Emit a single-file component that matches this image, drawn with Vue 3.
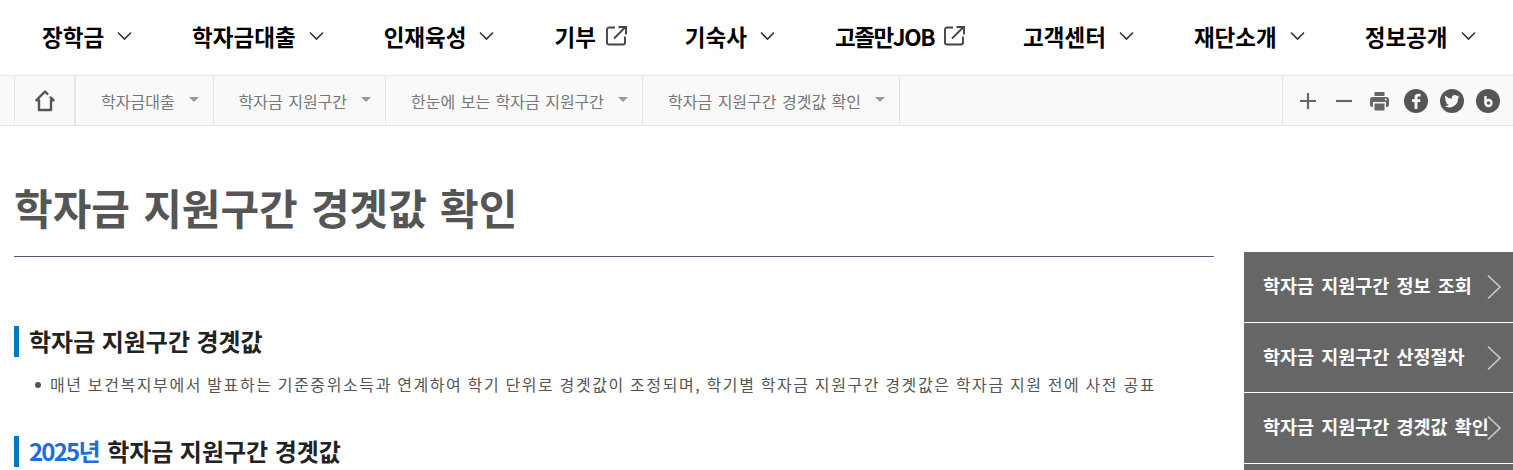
<template>
  <div class="page">
    <nav class="gnb">
      <a v-for="item in menus" :key="item.label" class="gnb-item" :class="{ job: item.label.includes('JOB'), linked: item.link }">
        <span>{{ item.label }}</span>
        <svg v-if="item.link" class="ext" width="21" height="20" viewBox="0 0 21 20" fill="none">
          <path d="M9 1.500H3A2 2 0 0 0 1 3.500v13a2 2 0 0 0 2 2h14a2 2 0 0 0 2-2v-6" stroke="#444" stroke-width="1.900" />
          <path d="M8 12.500 19 1.500M12.500 1H20v7.500" stroke="#444" stroke-width="1.900" />
        </svg>
        <svg v-else class="chev" width="15" height="10" viewBox="0 0 15 10" fill="none">
          <path d="M1 1.500 7.500 8 14 1.500" stroke="#333" stroke-width="1.600" />
        </svg>
      </a>
    </nav>

    <div class="crumbs">
      <a class="home">
        <svg width="22" height="22" viewBox="0 0 22 22" fill="none">
          <path d="M14 4.500 11 1.500 2.500 10.200H5V20h12v-9.800h2.500L16 6.800" stroke="#555" stroke-width="2.400" stroke-linejoin="round" />
        </svg>
      </a>
      <a v-for="c in crumbs" :key="c" class="crumb">
        <span>{{ c }}</span>
        <i class="caret"></i>
      </a>
      <div class="tools">
        <svg class="t-plus" width="16" height="16" viewBox="0 0 16 16"><path d="M8 0v16M0 8h16" stroke="#666" stroke-width="2.200" /></svg>
        <svg class="t-minus" width="16" height="16" viewBox="0 0 16 16"><path d="M0 8h16" stroke="#666" stroke-width="2.200" /></svg>
        <svg class="t-print" width="19" height="20" viewBox="0 0 19 20" fill="#666">
          <path d="M4.500 1h10v4h-10z" />
          <rect y="6" width="19" height="10" rx="2.500" />
          <rect x="3" y="11" width="13" height="9" fill="#f9f9f9" />
          <rect x="4.500" y="12.500" width="10" height="7" />
          <circle cx="15.800" cy="8.500" r="0.900" fill="#f9f9f9" />
        </svg>
        <svg class="t-fb" width="24" height="24" viewBox="0 0 24 24">
          <circle cx="12" cy="12" r="12" fill="#555" />
          <path d="M13.500 20v-7h2.600l.4-2.800h-3V8.700c0-.8.3-1.300 1.400-1.300h1.700V4.900c-.4 0-1.300-.1-2.300-.1-2.300 0-3.800 1.300-3.800 3.700v1.700H8V13h2.500v7Z" fill="#f9f9f9" />
        </svg>
        <svg class="t-tw" width="24" height="24" viewBox="0 0 24 24">
          <circle cx="12" cy="12" r="12" fill="#555" />
          <path d="M19.500 7.400c-.6.3-1.200.4-1.800.5.600-.4 1.100-1 1.300-1.700-.6.400-1.300.6-2 .8a3.100 3.100 0 0 0-5.300 2.800A8.800 8.800 0 0 1 5.400 6.500a3.100 3.100 0 0 0 1 4.100c-.5 0-1-.1-1.400-.4 0 1.500 1.100 2.800 2.500 3.100-.5.100-.9.100-1.400.1.400 1.200 1.500 2.100 2.900 2.100A6.200 6.200 0 0 1 4.500 17a8.800 8.800 0 0 0 13.500-7.800c.6-.4 1.100-1 1.500-1.800Z" fill="#f9f9f9" />
        </svg>
        <svg class="t-b" width="24" height="24" viewBox="0 0 24 24">
          <circle cx="12" cy="12" r="12" fill="#555" />
          <path d="M9.500 7v7.500" stroke="#f9f9f9" stroke-width="2.400" fill="none" />
          <circle cx="12.500" cy="14" r="3" stroke="#f9f9f9" stroke-width="2.400" fill="none" />
        </svg>
      </div>
    </div>

    <div class="body">
      <main class="content">
        <h1 class="title">학자금 지원구간 경곗값 확인</h1>
        <h2 class="sub">학자금 지원구간 경곗값</h2>
        <ul class="list">
          <li>매년 보건복지부에서 발표하는 기준중위소득과 연계하여 학기 단위로 경곗값이 조정되며, 학기별 학자금 지원구간 경곗값은 학자금 지원 전에 사전 공표</li>
        </ul>
        <h2 class="sub second"><em>2025년</em> 학자금 지원구간 경곗값</h2>
      </main>
      <aside class="side">
        <a v-for="s in sideLinks" :key="s" class="side-item">
          <span>{{ s }}</span>
          <svg class="arrow" width="16" height="26" viewBox="0 0 16 26" fill="none">
            <path d="M2 1.500 14 13 2 24.500" stroke="#c8c8c8" stroke-width="1.700" />
          </svg>
        </a>
        <a class="side-item"></a>
      </aside>
    </div>
  </div>
</template>

<script setup>
const menus = [
  { label: "장학금" },
  { label: "학자금대출" },
  { label: "인재육성" },
  { label: "기부", link: true },
  { label: "기숙사" },
  { label: "고졸만JOB", link: true },
  { label: "고객센터" },
  { label: "재단소개" },
  { label: "정보공개" },
];

const crumbs = ["학자금대출", "학자금 지원구간", "한눈에 보는 학자금 지원구간", "학자금 지원구간 경곗값 확인"];

const sideLinks = ["학자금 지원구간 정보 조회", "학자금 지원구간 산정절차", "학자금 지원구간 경곗값 확인"];
</script>

<style>
html,
body {
  margin: 0;
  overflow: hidden;
}
</style>

<style scoped>
.page {
  width: 1513px;
  height: 470px;
  overflow: hidden;
  background: #fff;
  font-family: "Noto Sans CJK KR", "Noto Sans", sans-serif;
}

.gnb {
  display: flex;
  align-items: center;
  gap: 60px;
  height: 72px;
  padding: 0 0 3px 42px;
}

.gnb-item {
  display: flex;
  align-items: center;
  gap: 13px;
  font-size: 22.500px;
  font-weight: 700;
  color: #000;
  white-space: nowrap;
}

.gnb-item.linked {
  gap: 10px;
}

.gnb-item.job span {
  letter-spacing: -1.400px;
}

.ext {
  margin: -1px -2px 0 0;
}

.crumbs {
  display: flex;
  height: 49px;
  padding-left: 14px;
  background: #f9f9f9;
  border-top: 1px solid #e5e5e5;
  border-bottom: 1px solid #e5e5e5;
}

.home {
  display: flex;
  align-items: center;
  justify-content: center;
  width: 59px;
  border-left: 1px solid #e5e5e5;
  border-right: 2px solid #e5e5e5;
}

.crumb {
  display: flex;
  align-items: center;
  gap: 14px;
  padding: 0 14px 0 25px;
  font-size: 16px;
  word-spacing: 1.850px;
  color: #777;
  border-right: 1px solid #e5e5e5;
  white-space: nowrap;
}

.caret {
  width: 0;
  height: 0;
  margin-bottom: 2px;
  border-left: 5px solid transparent;
  border-right: 5px solid transparent;
  border-top: 5px solid #999;
}

.tools {
  display: flex;
  align-items: center;
  margin-left: auto;
  width: 231px;
  padding-left: 17px;
  box-sizing: border-box;
  border-left: 1px solid #e5e5e5;
}

.t-minus {
  margin-left: 20px;
}

.t-print {
  margin-left: 18px;
}

.t-fb {
  margin-left: 15px;
}

.t-tw,
.t-b {
  margin-left: 12px;
}

.body {
  display: flex;
}

.content {
  width: 1200px;
  margin-left: 14px;
}

.title {
  margin: 0;
  height: 131px;
  box-sizing: border-box;
  padding-top: 50px;
  border-bottom: 1px solid #5c5470;
  font-size: 42px;
  word-spacing: 3.700px;
  line-height: 62px;
  font-weight: 700;
  color: #555;
}

.sub {
  margin: 69px 0 0;
  padding-left: 10px;
  height: 31px;
  border-left: 5px solid #0077c0;
  font-size: 24px;
  word-spacing: 1px;
  line-height: 29px;
  font-weight: 700;
  color: #222;
}

.sub em {
  margin-right: 2px;
  font-style: normal;
  letter-spacing: -1.800px;
  color: #1a6fdc;
}

.second {
  margin-top: 39px;
}

.list {
  margin: 14px 0 0;
  padding: 0 0 0 36px;
  list-style: none;
  font-size: 16px;
  line-height: 26px;
  color: #555;
  letter-spacing: 1.600px;
  white-space: nowrap;
}

.list li {
  position: relative;
}

.list li::before {
  content: "";
  position: absolute;
  left: -15px;
  top: 11px;
  width: 6px;
  height: 6px;
  border-radius: 50%;
  background: #555;
}

.side {
  width: 269px;
  margin: 126px 0 0 30px;
}

.side-item {
  position: relative;
  display: flex;
  align-items: center;
  height: 70px;
  box-sizing: border-box;
  padding: 0 0 4px 19px;
  margin-bottom: 1px;
  background: #666;
  color: #fff;
  font-size: 18.500px;
  font-weight: 700;
  word-spacing: 3px;
  white-space: nowrap;
}

.side-item:nth-child(even) {
  height: 69px;
}

.arrow {
  position: absolute;
  right: 11px;
  top: 50%;
  transform: translateY(-50%);
}
</style>
